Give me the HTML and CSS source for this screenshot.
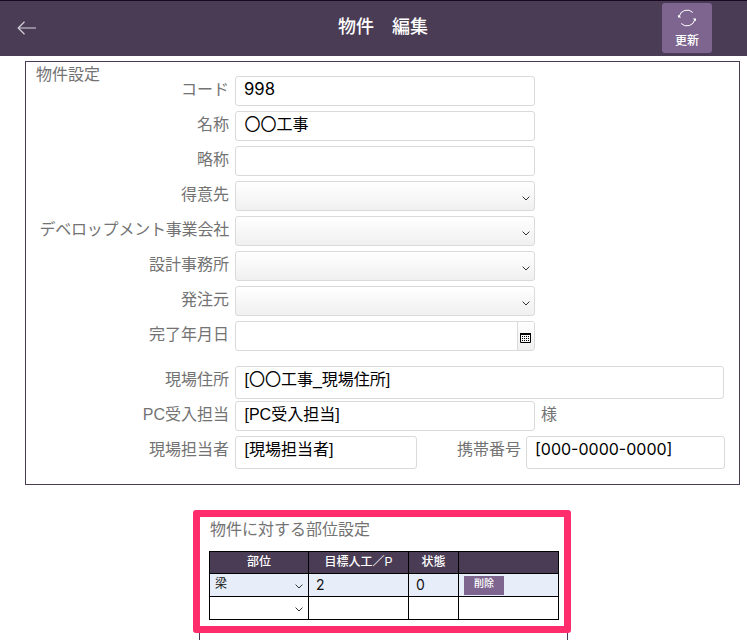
FILE: index.html
```html
<!DOCTYPE html>
<html lang="ja">
<head>
<meta charset="utf-8">
<title>物件 編集</title>
<link rel="stylesheet" href="styles.css">
</head>
<body>
<header class="bar">
  <svg class="back" width="20" height="14" viewBox="0 0 20 14"><path class="shaft" d="M19 7H2"/><path d="M7.500 .8L1.200 7l6.300 6.200"/></svg>
  <h1 class="title">物件　編集</h1>
  <button class="update">
    <svg width="18" height="18" viewBox="0 0 18 18"><path d="M1.200 7.500A8 8 0 0 1 14.800 3.500M16.800 10.500A8 8 0 0 1 3.200 14.500"/><path class="tip" d="M0 5.700v2.800h3.300zM18 12.300V9.500h-3.300z"/></svg>
    <span>更新</span>
  </button>
</header>
<main>
  <section class="panel">
    <h2 class="caption">物件設定</h2>
    <div class="form">
      <div class="row"><label>コード</label><div class="field num code">998</div></div>
      <div class="row"><label>名称</label><div class="field">〇〇工事</div></div>
      <div class="row"><label>略称</label><div class="field"></div></div>
      <div class="row"><label>得意先</label><div class="field select"><svg class="chev" viewBox="0 0 8 5"><path d="M.6.6L4 4 7.400.6"/></svg></div></div>
      <div class="row"><label class="long">デベロップメント事業会社</label><div class="field select"><svg class="chev" viewBox="0 0 8 5"><path d="M.6.6L4 4 7.400.6"/></svg></div></div>
      <div class="row"><label>設計事務所</label><div class="field select"><svg class="chev" viewBox="0 0 8 5"><path d="M.6.6L4 4 7.400.6"/></svg></div></div>
      <div class="row"><label>発注元</label><div class="field select"><svg class="chev" viewBox="0 0 8 5"><path d="M.6.6L4 4 7.400.6"/></svg></div></div>
      <div class="row"><label>完了年月日</label><div class="field date"><span class="pick"><svg width="11" height="10" viewBox="0 0 11 10"><path class="frame" d="M.5 1v8.500h10V1"/><path class="top" d="M0 0h11v2H0z"/><path class="dots" d="M2 3.500h7M2 5.500h7M2 7.500h7"/></svg></span></div></div>
      <div class="row gap"><label>現場住所</label><div class="field tall wide">[〇〇工事_現場住所]</div></div>
      <div class="row"><label>PC受入担当</label><div class="field">[PC受入担当]</div><span class="suffix">様</span></div>
      <div class="row"><label>現場担当者</label><div class="field tall short">[現場担当者]</div><label class="second">携帯番号</label><div class="field tall phone num">[000-0000-0000]</div></div>
    </div>
  </section>
  <section class="parts">
    <h2 class="caption">物件に対する部位設定</h2>
    <table>
      <colgroup><col class="c1"><col class="c2"><col class="c3"><col class="c4"></colgroup>
      <tr class="head"><th>部位</th><th>目標人工／P</th><th>状態</th><th></th></tr>
      <tr class="active"><td><div class="cell"><span class="pick-text">梁</span><svg class="chev" viewBox="0 0 8 5"><path d="M.6.6L4 4 7.400.6"/></svg></div></td><td><div class="cell">2</div></td><td><div class="cell">0</div></td><td><button class="delete">削除</button></td></tr>
      <tr><td><div class="cell"><span></span><svg class="chev" viewBox="0 0 8 5"><path d="M.6.6L4 4 7.400.6"/></svg></div></td><td></td><td></td><td></td></tr>
    </table>
    <div class="highlight"></div>
  </section>
</main>
</body>
</html>
```
FILE: styles.css
```css
* { box-sizing: border-box; }
body { margin: 0; background: #fff; color: #111; font: 16px/20px "Liberation Sans", "Noto Sans CJK JP", sans-serif; }
h1, h2 { margin: 0; font-weight: normal; }
svg { display: block; flex: none; fill: none; }
button { border: 0; padding: 0; font-family: inherit; color: #fff; background: #7e658f; }

.bar { height: 56px; border-top: 1px solid #180820; background: #4a3c54; display: grid; grid-template-columns: 85px 1fr 85px; }
.back { margin: 20px 0 0 17px; stroke: #d6d1da; stroke-width: 1.2; }
.back .shaft { stroke: #aaa2b0; stroke-width: 1.5; }
.title { padding: 14px 0 0 19px; text-align: center; color: #fff; font-size: 18px; line-height: 24px; font-weight: 500; }
.update { width: 50px; height: 50px; margin-top: 2px; border-radius: 3px; display: flex; flex-direction: column; align-items: center; padding-top: 6px; font-size: 12px; line-height: 16px; font-weight: 500; }
.update svg { stroke: #fff; stroke-width: 1; }
.update .tip { fill: #fff; stroke: none; }
.update span { margin-top: 6px; }

.panel { width: 715px; height: 424px; margin: 5px 0 0 25px; border: 1px solid #4a3c54; }
.caption { height: 0; padding-left: 10px; font-size: 16px; line-height: 26px; color: #737373; }
.form { padding-top: 14px; }
.row { display: flex; margin-bottom: 5px; }
.row label { width: 203px; margin-right: 6px; text-align: right; line-height: 27px; color: #737373; white-space: nowrap; }
.row .long { letter-spacing: -.2px; }
.row .second { width: 104px; margin-right: 5px; }
.field { width: 300px; height: 30px; border: 1px solid #dadada; border-radius: 3px; padding: 2px 8.5px 0; line-height: 21px; color: #000; background: #fff; }
.num { font-family: Inter, sans-serif; padding-left: 8px; }
.code { font-size: 16.7px; }
.select { display: flex; justify-content: flex-end; padding: 14px 4px 0; background: linear-gradient(#fff, #f0f0f0); }
.chev { width: 8px; height: 5px; stroke: #333; stroke-width: 1; }
.date { display: flex; justify-content: flex-end; padding: 0; }
.pick { width: 17px; border-left: 1px solid #dadada; background: linear-gradient(#fff, #f0f0f0); padding: 11px 0 0 2px; border-radius: 0 2px 2px 0; }
.frame { stroke: #000; }
.top { fill: #000; }
.dots { stroke: #000; stroke-dasharray: 1 1; }
.tall { height: 33px; }
.wide { width: 489px; }
.short { width: 182px; }
.phone { width: 199px; }
.gap { margin-top: 15px; margin-bottom: 2px; }
.suffix { margin-left: 6px; line-height: 27px; color: #737373; }

.parts { position: relative; width: 369px; height: 124px; margin: 31px 0 0 199px; border: 1px solid #4a3c54; border-bottom: 0; }
.parts table { margin: 34px 0 0 9px; width: 350px; table-layout: fixed; border-collapse: collapse; }
.c1 { width: 99px; } .c2 { width: 100px; } .c3 { width: 50px; } .c4 { width: 100px; }
th, td { height: 23px; padding: 0; border: 1px solid #000; }
tr.head th { height: 22px; background: #4a3c54; color: #fff; font-size: 12px; line-height: 16px; font-weight: 500; padding-bottom: 2px; }
.active td { background: #e7eefa; }
td { vertical-align: top; }
.cell { height: 22px; display: flex; justify-content: space-between; padding: 0 5px 0 7px; line-height: 21px; font: 14px/21px Inter, "Noto Sans CJK JP", sans-serif; }
.pick-text { font-size: 12px; line-height: 20px; margin-left: -2px; }
.cell .chev { margin-top: 10px; }
.delete { display: block; width: 40px; height: 19px; margin: 2px 0 0 5px; padding-bottom: 4px; font-size: 10px; line-height: 14px; font-weight: 500; }
.highlight { position: absolute; left: -7px; top: -7px; width: 378px; height: 123px; border: 7px solid #ff2d6b; border-radius: 3px; }
```
